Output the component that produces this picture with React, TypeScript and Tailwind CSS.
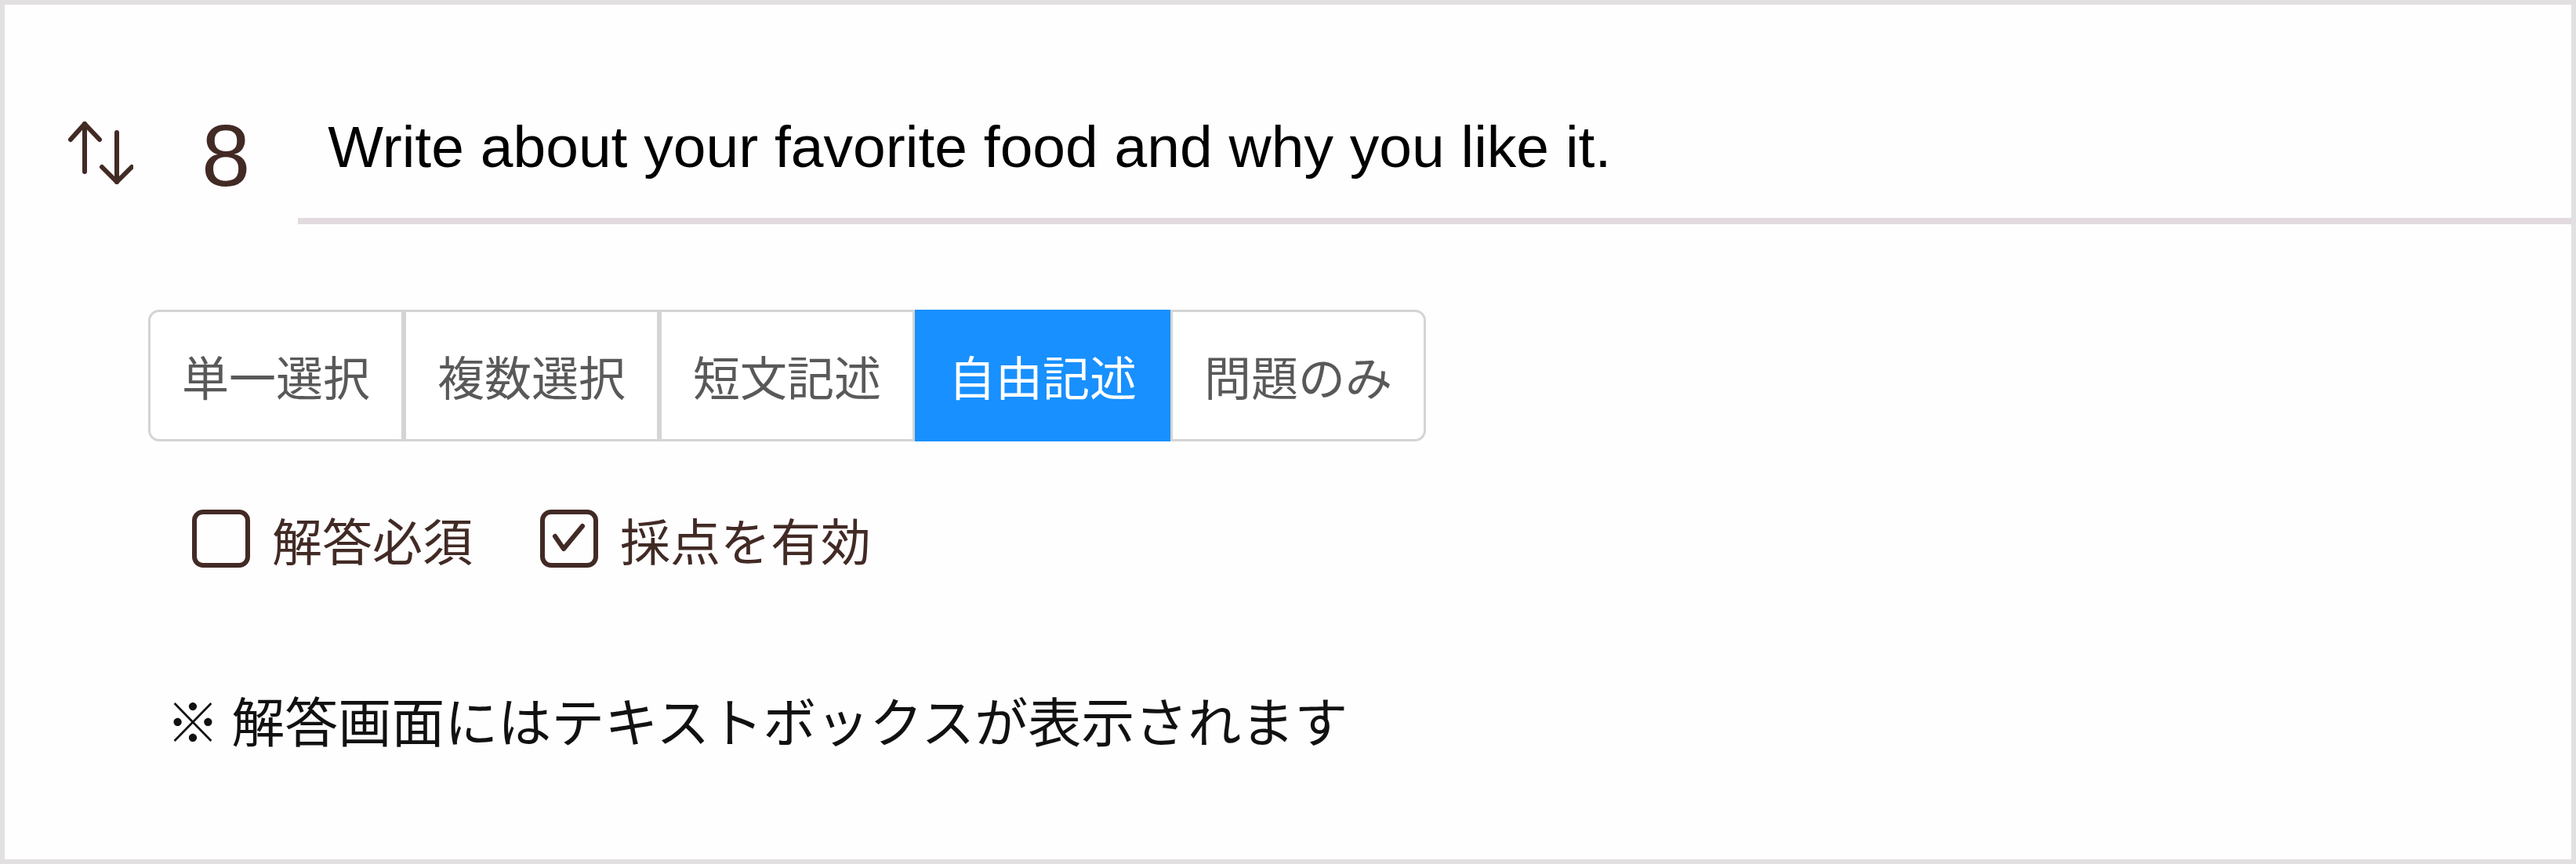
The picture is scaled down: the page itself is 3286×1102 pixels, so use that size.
import React from "react";

const tabs = ["単一選択", "複数選択", "短文記述", "自由記述", "問題のみ"];
const activeTab = 3;

const jp = "font-['Noto_Sans_CJK_JP','Noto_Sans',sans-serif]";

function SortIcon() {
  return (
    <svg width="84" height="82" viewBox="0 0 84 82" fill="none" stroke="#422a25" strokeWidth="6" strokeLinecap="round" strokeLinejoin="round">
      {/* up arrow */}
      <path d="M22 4 V65" />
      <path d="M4 24 L22 4 L41 24" />
      {/* down arrow */}
      <path d="M63 15 V78" />
      <path d="M44 59 L63 78 L82 59" />
    </svg>
  );
}

function Checkbox({ checked, label }: { checked: boolean; label: string }) {
  return (
    <label className="flex items-center gap-[28px]">
      <span className="flex items-center justify-center w-[74px] h-[74px] rounded-[14px] border-[6px] border-[#422a25]">
        {checked && (
          <svg width="62" height="62" viewBox="0 0 62 62" fill="none" stroke="#422a25" strokeWidth="6" strokeLinecap="round" strokeLinejoin="round">
            <path d="M13 28 L24 44 L48 15" />
          </svg>
        )}
      </span>
      <span className={`${jp} text-[64px] leading-none text-[#422a25]`}>{label}</span>
    </label>
  );
}

export default function App() {
  return (
    <div className="w-[3286px] h-[1102px] border-[6px] border-[#e2e0e1] bg-[#fefefe] flex flex-col">
      {/* Question header */}
      <div className="flex items-start">
        <div className="ml-[80px] mt-[148px]">
          <SortIcon />
        </div>
        <div className="ml-[87px] mt-[137px] text-[112px] leading-[112px] text-[#422a25] font-['Liberation_Sans',sans-serif]">
          8
        </div>
        <div className="flex-1 ml-[61px] mt-[137px] pl-[38px] pb-[47px] border-b-[8px] border-[#e2dadf]">
          <p className="text-[75px] leading-[88px] text-black font-['Liberation_Sans',sans-serif] whitespace-nowrap">
            Write about your favorite food and why you like it.
          </p>
        </div>
      </div>

      {/* Question type tabs */}
      <div className="flex ml-[183px] mt-[109px] self-start">
        {tabs.map((t, i) => {
          const active = i === activeTab;
          return (
            <div
              key={t}
              className={`flex items-center justify-center h-[168px] px-[40px] border-[3px] ${jp} text-[60px] leading-none ${
                active ? "bg-[#1890ff] border-[#1890ff] text-white" : "bg-white border-[#d4d4d4] text-[#595959]"
              } ${i === 0 ? "rounded-l-[14px]" : ""} ${i === tabs.length - 1 ? "rounded-r-[14px]" : ""}`}
            >
              {t}
            </div>
          );
        })}
      </div>

      {/* Options */}
      <div className="flex items-center gap-[86px] ml-[239px] mt-[87px]">
        <Checkbox checked={false} label="解答必須" />
        <Checkbox checked={true} label="採点を有効" />
      </div>

      {/* Note */}
      <p className={`${jp} ml-[206px] mt-[160px] text-[68px] leading-none text-[#111]`}>
        ※ 解答画面にはテキストボックスが表示されます
      </p>
    </div>
  );
}
